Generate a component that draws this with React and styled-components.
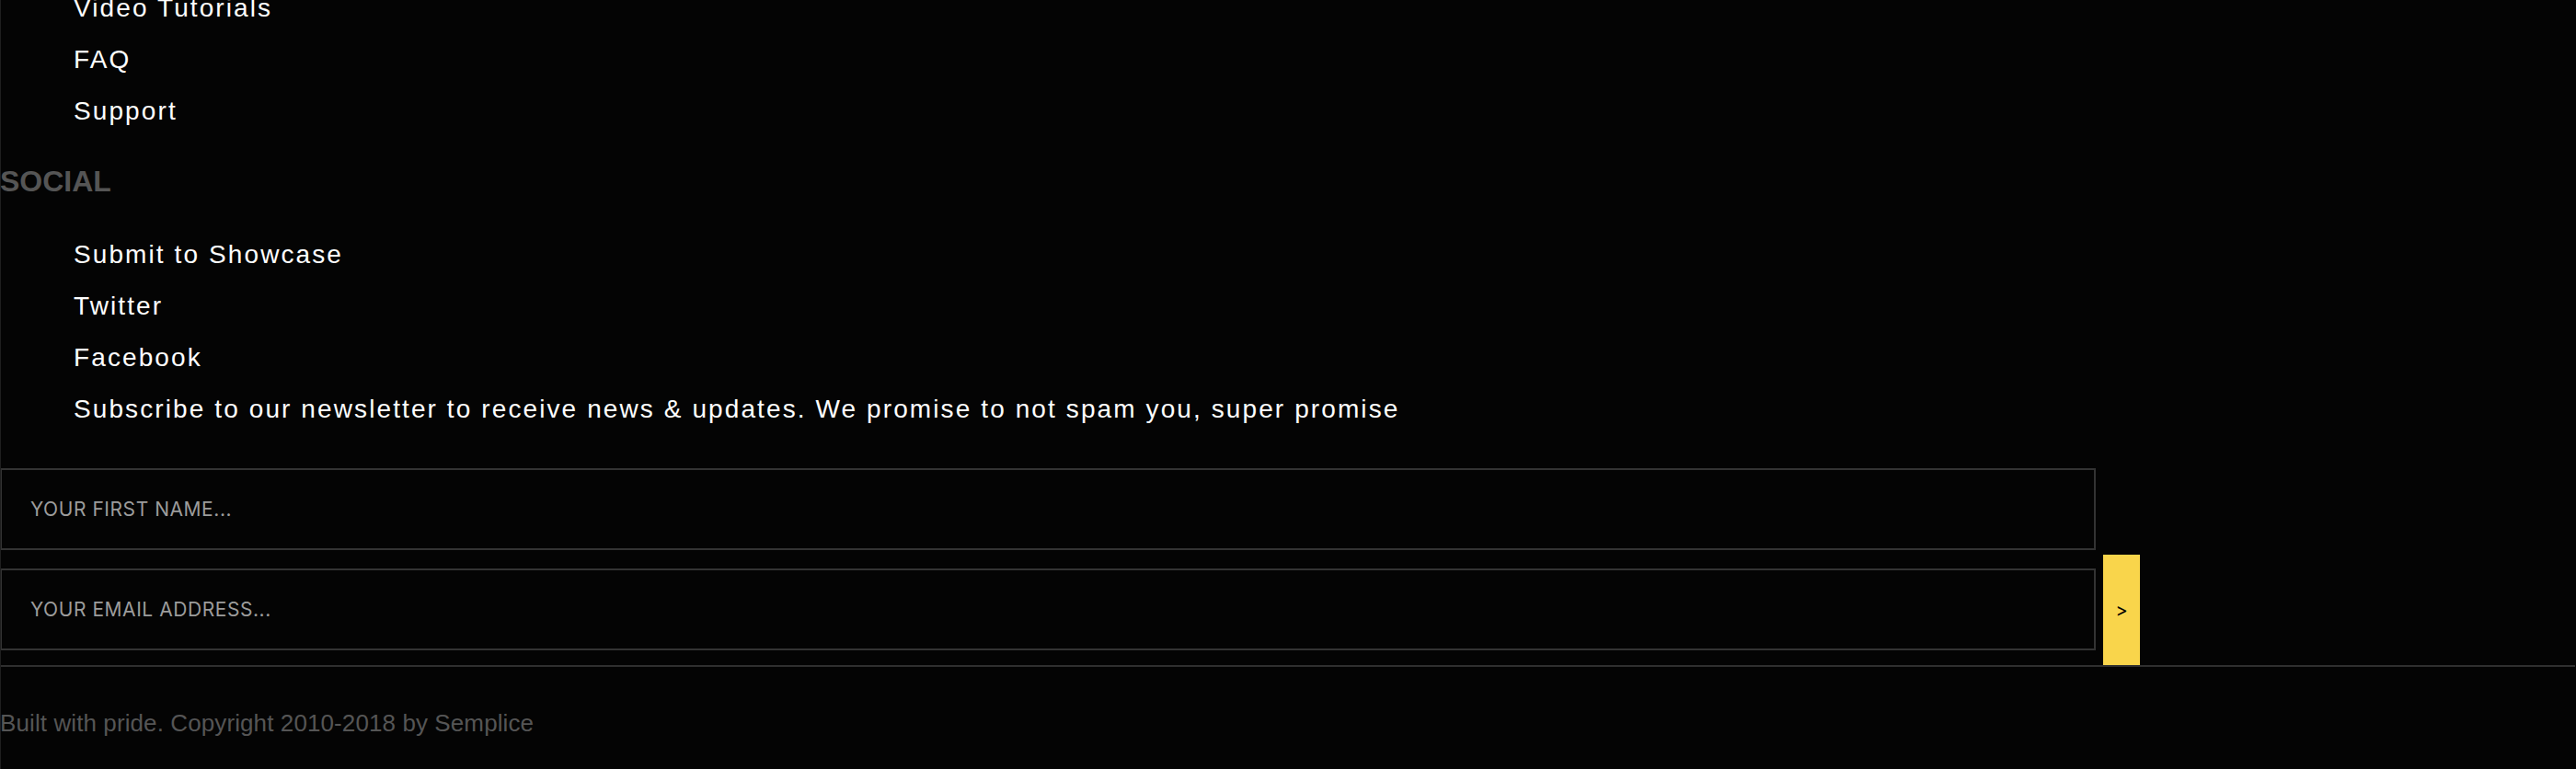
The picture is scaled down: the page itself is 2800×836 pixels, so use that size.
import React from "react";
import styled, { createGlobalStyle } from "styled-components";

const GlobalStyle = createGlobalStyle`
  html, body {
    margin: 0;
    padding: 0;
    background: #040404;
  }
  * { box-sizing: border-box; }
`;

const Page = styled.div`
  display: flex;
  flex-direction: column;
  min-height: 836px;
  overflow: hidden;
  border-left: 1px solid #1f1f1f;
  background: #040404;
  font-family: "Liberation Sans", Arial, sans-serif;
`;

const LinkList = styled.ul`
  list-style: none;
  margin: ${(p) => p.$top || 0}px 0 0 0;
  padding: 0 0 0 79px;
`;

const LinkItem = styled.li`
  font-size: 28px;
  line-height: 56px;
  letter-spacing: 2.1px;
  color: #ffffff;
  white-space: nowrap;
`;

const SectionTitle = styled.h3`
  margin: 28px 0 32px -1px;
  font-size: 32px;
  line-height: 40px;
  font-weight: 700;
  color: #555555;
  letter-spacing: 0;
`;

const Form = styled.form`
  display: flex;
  align-items: flex-end;
  gap: 8px;
  margin: 36px 0 0 -1px;
`;

const Fields = styled.div`
  display: flex;
  flex-direction: column;
  gap: 20px;
  width: 2278px;
  margin-bottom: 16px;
`;

const Field = styled.input`
  display: block;
  width: 100%;
  height: 89px;
  margin: 0;
  padding: 0 0 0 31px;
  border: 2px solid #333333;
  border-radius: 0;
  background: transparent;
  color: #dddddd;
  font-family: Inter, "Noto Sans", sans-serif;
  font-size: 21px;
  letter-spacing: 0.55px;
  outline: none;

  &::placeholder {
    color: #9c9c9c;
    opacity: 1;
  }
`;

const SubmitButton = styled.button`
  width: 40px;
  height: 120px;
  margin: 0;
  padding: 0;
  border: none;
  border-radius: 0;
  background: #f9d54b;
  color: #000000;
  font-family: Inter, "Noto Sans", sans-serif;
  font-size: 20px;
  cursor: pointer;
`;

const Divider = styled.hr`
  width: 100%;
  height: 2px;
  margin: 0 0 0 -1px;
  border: none;
  background: #2f2f2f;
`;

const Copyright = styled.p`
  margin: 46px 0 0 -1px;
  font-family: "Liberation Sans", Arial, sans-serif;
  font-size: 26px;
  line-height: 30px;
  font-weight: 400;
  letter-spacing: 0.1px;
  color: #555555;
`;

const resources = ["Video Tutorials", "FAQ", "Support"];
const social = [
  "Submit to Showcase",
  "Twitter",
  "Facebook",
  "Subscribe to our newsletter to receive news & updates. We promise to not spam you, super promise",
];

export default function App() {
  return (
    <>
      <GlobalStyle />
      <Page>
        <LinkList $top={-19}>
          {resources.map((t) => (
            <LinkItem key={t}>{t}</LinkItem>
          ))}
        </LinkList>
        <SectionTitle>SOCIAL</SectionTitle>
        <LinkList>
          {social.map((t) => (
            <LinkItem key={t}>{t}</LinkItem>
          ))}
        </LinkList>
        <Form onSubmit={(e) => e.preventDefault()}>
          <Fields>
            <Field type="text" placeholder="YOUR FIRST NAME..." />
            <Field type="email" placeholder="YOUR EMAIL ADDRESS..." />
          </Fields>
          <SubmitButton type="submit">&gt;</SubmitButton>
        </Form>
        <Divider />
        <Copyright>Built with pride. Copyright 2010-2018 by Semplice</Copyright>
      </Page>
    </>
  );
}
